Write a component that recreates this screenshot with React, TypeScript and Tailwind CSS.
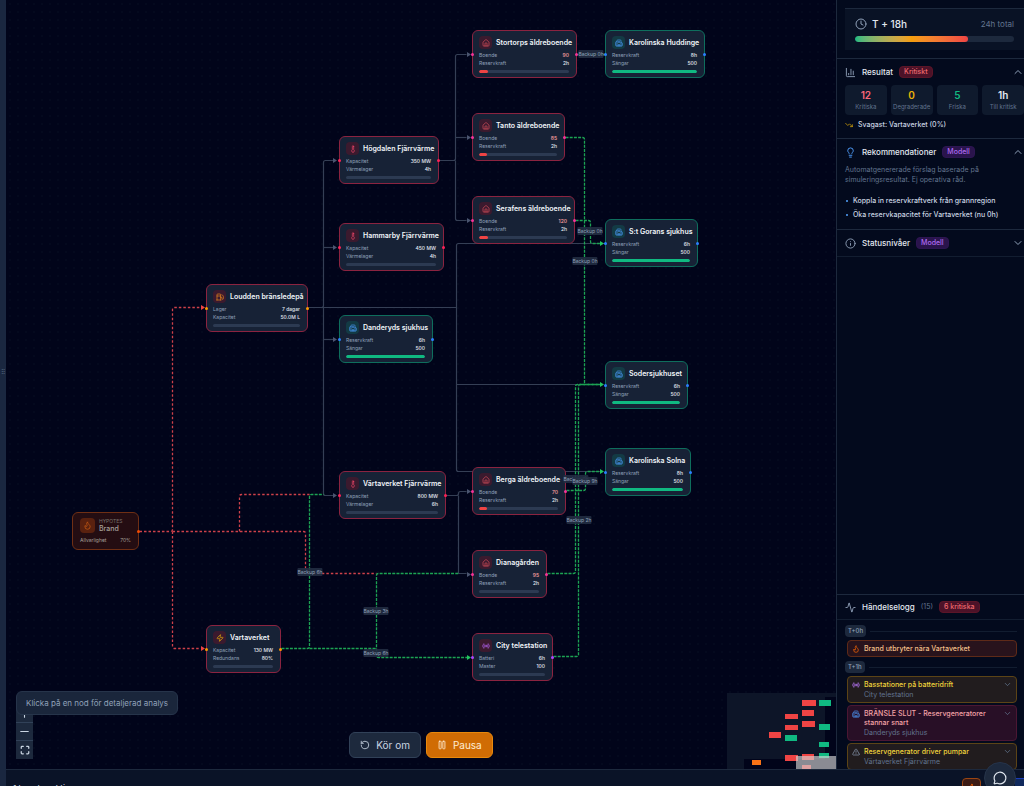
import {
  Activity,
  ChartColumn,
  ChevronDown,
  ChevronUp,
  Clock,
  Flame,
  Fuel,
  Hospital,
  House,
  Info,
  Lightbulb,
  LucideIcon,
  Maximize,
  MessageCircle,
  Minus,
  Pause,
  Plus,
  Radio,
  RotateCcw,
  Thermometer,
  TrendingDown,
  TriangleAlert,
  Zap,
} from 'lucide-react';
import { ReactNode } from 'react';

type Kind = 'care' | 'hospital' | 'heat' | 'fuel' | 'power' | 'telecom';

type NodeType = {
  title: string;
  kind: Kind;
  x: number;
  y: number;
  w: number;
  rows: [string, string][];
  level: number;
};

const kinds: Record<Kind, { icon: LucideIcon; color: string; handle: string }> = {
  care: { icon: House, color: 'text-[#e0525f]', handle: 'bg-pink-500' },
  hospital: { icon: Hospital, color: 'text-[#4b9bfa]', handle: 'bg-blue-500' },
  heat: { icon: Thermometer, color: 'text-[#f0476a]', handle: 'bg-rose-500' },
  fuel: { icon: Fuel, color: 'text-[#f08c1c]', handle: 'bg-amber-500' },
  power: { icon: Zap, color: 'text-[#eab308]', handle: 'bg-amber-500' },
  telecom: { icon: Radio, color: 'text-[#b262f0]', handle: 'bg-purple-500' },
};

const nodes: NodeType[] = [
  { title: 'Stortorps äldreboende', kind: 'care', x: 472, y: 30, w: 105, rows: [['Boende', '90'], ['Reservkraft', '2h']], level: 10 },
  { title: 'Tanto äldreboende', kind: 'care', x: 472, y: 113, w: 93, rows: [['Boende', '85'], ['Reservkraft', '2h']], level: 10 },
  { title: 'Serafens äldreboende', kind: 'care', x: 472, y: 196, w: 103, rows: [['Boende', '120'], ['Reservkraft', '2h']], level: 10 },
  { title: 'Berga äldreboende', kind: 'care', x: 472, y: 467, w: 94, rows: [['Boende', '70'], ['Reservkraft', '2h']], level: 10 },
  { title: 'Dianagården', kind: 'care', x: 472, y: 550, w: 75, rows: [['Boende', '95'], ['Reservkraft', '2h']], level: 0 },
  { title: 'City telestation', kind: 'telecom', x: 472, y: 633, w: 81, rows: [['Batteri', '6h'], ['Master', '100']], level: 0 },
  { title: 'Karolinska Huddinge', kind: 'hospital', x: 605, y: 30, w: 100, rows: [['Reservkraft', '8h'], ['Sängar', '500']], level: 100 },
  { title: 'S:t Gorans sjukhus', kind: 'hospital', x: 605, y: 219, w: 93, rows: [['Reservkraft', '6h'], ['Sängar', '500']], level: 100 },
  { title: 'Sodersjukhuset', kind: 'hospital', x: 605, y: 361, w: 83, rows: [['Reservkraft', '6h'], ['Sängar', '500']], level: 100 },
  { title: 'Karolinska Solna', kind: 'hospital', x: 605, y: 448, w: 86, rows: [['Reservkraft', '8h'], ['Sängar', '500']], level: 100 },
  { title: 'Danderyds sjukhus', kind: 'hospital', x: 339, y: 315, w: 94, rows: [['Reservkraft', '6h'], ['Sängar', '500']], level: 100 },
  { title: 'Högdalen Fjärrvärme', kind: 'heat', x: 339, y: 136, w: 100, rows: [['Kapacitet', '350 MW'], ['Värmelager', '4h']], level: 0 },
  { title: 'Hammarby Fjärrvärme', kind: 'heat', x: 339, y: 223, w: 105, rows: [['Kapacitet', '450 MW'], ['Värmelager', '4h']], level: 0 },
  { title: 'Värtaverket Fjärrvärme', kind: 'heat', x: 339, y: 471, w: 107, rows: [['Kapacitet', '800 MW'], ['Värmelager', '6h']], level: 0 },
  { title: 'Loudden bränsledepå', kind: 'fuel', x: 206, y: 284, w: 102, rows: [['Lager', '7 dagar'], ['Kapacitet', '50.0M L']], level: 0 },
  { title: 'Vartaverket', kind: 'power', x: 206, y: 625, w: 75, rows: [['Kapacitet', '130 MW'], ['Redundans', '80%']], level: 0 },
];

const supplyEdges = [
  'M308 307H321Q323 307 323 305V162Q323 160 325 160H333',
  'M323 247H333',
  'M323 339H333',
  'M323 307V493Q323 495 325 495H333',
  'M308 307H456',
  'M605 243H458Q456 243 456 245V469Q456 471 458 471H600',
  'M456 384H600',
  'M439 160H453Q455 160 455 158V56Q455 54 457 54H466',
  'M455 137H466',
  'M455 160V218Q455 220 457 220H466',
  'M446 495H456Q458 495 458 493Q458 491 460 491H466',
  'M458 495V573H466',
];

const threatEdges = [
  'M139 531H170Q172 531 172 529V309Q172 307 174 307H200',
  'M172 531V646Q172 648 174 648H200',
  'M172 531H303Q305 531 305 533V571Q305 573 307 573H376',
  'M239 531V496Q239 494 241 494H309',
];

const backupEdges = [
  'M281 648H307Q309 648 309 646V496Q309 494 311 494H323',
  'M309 648H374Q376 648 376 646V575Q376 573 378 573H458',
  'M376 648V655Q376 657 378 657H467',
  'M565 137H582Q584 137 584 139V384',
  'M575 220H588Q590 220 590 222V241Q590 243 592 243H600',
  'M566 490H583Q585 490 585 488V473Q585 471 587 471H600',
  'M547 573H573Q575 573 575 571V386Q575 384 577 384H600',
  'M553 656H576Q578 656 578 654V386Q578 384 580 384H600',
  'M577 54H605',
];

const arrows = {
  'fill-[#4b5570]': [[333, 160], [333, 247], [333, 339], [333, 495], [467, 54], [467, 137], [467, 220], [467, 491], [467, 574]],
  'fill-[#ef4444]': [[201, 307], [201, 648]],
  'fill-[#22c55e]': [[600, 243], [600, 384], [600, 471], [467, 657]],
};

const backupLabels = [
  { text: 'Backup 0h', x: 591, y: 54 },
  { text: 'Backup 0h', x: 590, y: 231 },
  { text: 'Backup 0h', x: 585, y: 261 },
  { text: 'Backup 0h', x: 576, y: 479 },
  { text: 'Backup 9h', x: 585, y: 481 },
  { text: 'Backup 2h', x: 579, y: 520 },
  { text: 'Backup 6h', x: 310, y: 572 },
  { text: 'Backup 3h', x: 376, y: 611 },
  { text: 'Backup 6h', x: 376, y: 653 },
];

const Edges = () => (
  <svg className="absolute inset-0 h-full w-full" fill="none" aria-hidden="true">
    <g transform="translate(0.5 0.5)">
      {supplyEdges.map((d) => (
        <path key={d} d={d} className="stroke-[#353f55]" strokeWidth={1.2} />
      ))}
      {threatEdges.map((d) => (
        <path key={d} d={d} className="stroke-[#cf414a]" strokeWidth={1.3} strokeDasharray="2.5 2" />
      ))}
      {backupEdges.map((d) => (
        <path key={d} d={d} className="stroke-[#1ca353]" strokeWidth={1.3} strokeDasharray="3 1.2" />
      ))}
    </g>
    {Object.entries(arrows).map(([fill, points]) =>
      points.map(([x, y]) => (
        <path key={`${x}-${y}`} d={`M${x} ${y - 2}L${x + 4} ${y + 0.5}L${x} ${y + 3}Z`} className={fill} />
      ))
    )}
  </svg>
);

const InfraNode = ({ node }: { node: NodeType }) => {
  const { title, kind, x, y, w, rows, level } = node;
  const { icon: Icon, color, handle } = kinds[kind];
  const healthy = level === 100;

  return (
    <div
      className={`absolute rounded-md border bg-[#172236] pt-[5px] pr-[7px] pb-1 pl-[6px] ${
        healthy ? 'border-[#0e6e5d]' : 'border-[#8b2340]'
      }`}
      style={{ left: x, top: y, width: w }}
    >
      <div className="flex items-center gap-1">
        <span
          className={`flex size-[13px] shrink-0 items-center justify-center rounded-sm ${
            healthy ? 'bg-[#133a44]' : 'bg-[#3b1a2e]'
          }`}
        >
          <Icon className={`size-[8px] ${color}`} />
        </span>
        <h3 className="text-[7px] leading-[9px] font-semibold whitespace-nowrap text-slate-100">
          {title}
        </h3>
      </div>
      <dl className="mt-[3px] flex flex-col gap-px text-[5px] leading-[7px]">
        {rows.map(([label, value]) => (
          <div key={label} className="flex justify-between">
            <dt className="text-slate-400">{label}</dt>
            <dd
              className={`font-medium ${
                label === 'Boende' ? 'text-red-300' : 'text-slate-200'
              }`}
            >
              {value}
            </dd>
          </div>
        ))}
      </dl>
      <div className="mt-[3px] h-[3px] overflow-hidden rounded-full bg-[#2c3a52]">
        <div
          className={`h-full rounded-full ${healthy ? 'bg-[#10b981]' : 'bg-[#ef4444]'}`}
          style={{ width: `${level}%` }}
        />
      </div>
      <span className={`absolute top-[22px] -left-[2px] size-[3px] rounded-full ${handle}`} />
      <span className={`absolute top-[22px] -right-[2px] size-[3px] rounded-full ${handle}`} />
    </div>
  );
};

const HypothesisNode = () => (
  <div
    className="absolute rounded-md border border-[#6f2f14] bg-[#240d12] px-[7px] py-[5px]"
    style={{ left: 72, top: 512, width: 67 }}
  >
    <div className="flex items-center gap-1">
      <span className="flex size-[15px] items-center justify-center rounded-sm bg-[#59210f]">
        <Flame className="size-[9px] text-[#c65a14]" />
      </span>
      <div>
        <p className="text-[5px] leading-[6px] text-stone-500">HYPOTES</p>
        <h3 className="text-[7px] leading-[9px] font-medium text-stone-400">Brand</h3>
      </div>
    </div>
    <p className="mt-1 flex justify-between text-[5px] leading-[7px] text-stone-400">
      <span>Allvarlighet</span>
      <span>70%</span>
    </p>
    <span className="absolute top-[17px] -right-[2px] size-[3px] rounded-full bg-orange-600" />
  </div>
);

const minimapNodes: Record<string, number[][]> = {
  'fill-[#ef4444]': [
    [75, 7, 14, 6], [75, 17, 12, 6], [75, 28, 13, 6], [58, 21, 13, 5], [58, 32, 13, 5],
    [42, 39, 12, 6], [58, 62, 13, 6], [75, 61, 12, 6], [75, 72, 9, 4],
  ],
  'fill-[#10b981]': [[92, 7, 12, 6], [92, 31, 11, 6], [58, 42, 12, 6], [92, 49, 10, 5], [92, 60, 10, 5]],
  'fill-[#f97316]': [[25, 67, 9, 5]],
};

const MiniMap = () => (
  <svg className="absolute right-0 bottom-0 h-[76px] w-[109px] bg-[#0d1528]" viewBox="0 0 109 76" aria-hidden="true">
    <path d="M98 4H109V76H17V66H98Z" className="fill-[#01041a]" />
    {Object.entries(minimapNodes).map(([fill, rects]) =>
      rects.map(([x, y, width, height]) => (
        <rect key={`${x}-${y}`} x={x} y={y} width={width} height={height} className={fill} />
      ))
    )}
    <rect x="69" y="63" width="40" height="13" fill="#d4d4d4" opacity="0.65" />
  </svg>
);

const Canvas = () => (
  <main className="relative min-w-0 flex-1 overflow-hidden bg-[#01041a] bg-[radial-gradient(#04091e_1px,transparent_1px)] bg-[size:8px_8px]">
    {/* panned viewport */}
    <div className="absolute inset-0 -left-1.5">
      <Edges />
      {nodes.map((node) => (
        <InfraNode key={node.title} node={node} />
      ))}
      <HypothesisNode />
      {backupLabels.map(({ text, x, y }) => (
        <span
          key={`${x}-${y}`}
          className="absolute -translate-x-1/2 -translate-y-1/2 rounded-[1px] bg-[#222e42]/90 text-[5px] leading-[8px] whitespace-nowrap text-slate-400"
          style={{ left: x, top: y }}
        >
          {text}
        </span>
      ))}
    </div>
    <MiniMap />
    <div className="absolute bottom-[10px] left-[10px] flex w-[17px] flex-col divide-y divide-slate-700 bg-slate-800 text-slate-300">
      <button aria-label="Zooma in" className="flex h-[18px] items-center justify-center">
        <Plus className="size-[13px]" />
      </button>
      <button aria-label="Zooma ut" className="flex h-[18px] items-center justify-center">
        <Minus className="size-[13px]" />
      </button>
      <button aria-label="Anpassa vy" className="flex h-[18px] items-center justify-center">
        <Maximize className="size-[10px]" strokeWidth={3} />
      </button>
    </div>
    <p className="absolute bottom-[54px] left-[10px] rounded-md border border-[#26344a] bg-[#1a263b] px-[9px] py-[5px] text-[8px] leading-3 text-slate-400">
      Klicka på en nod för detaljerad analys
    </p>
    <div className="absolute inset-x-0 bottom-[11px] flex justify-center gap-[5px] text-[10px] leading-4">
      <button className="flex items-center gap-[6px] rounded-md border border-slate-700 bg-slate-800 px-[10px] py-1 text-slate-300">
        <RotateCcw className="size-[10px]" />
        Kör om
      </button>
      <button className="flex items-center gap-[6px] rounded-md border border-[#e8890c] bg-[#d06c04] px-[10px] py-1 text-orange-100">
        <Pause className="size-[10px]" />
        Pausa
      </button>
    </div>
  </main>
);

const Badge = ({ tone, children }: { tone: 'red' | 'purple'; children: ReactNode }) => (
  <span
    className={`rounded-sm border px-1 text-[7px] leading-[10px] font-medium ${
      tone === 'red'
        ? 'border-[#5b1528] bg-[#4c1228] text-[#f06a6e]'
        : 'border-[#2d1552] bg-[#2a144c] text-[#ae6bf0]'
    }`}
  >
    {children}
  </span>
);

type Section = {
  icon: LucideIcon;
  iconColor?: string;
  title: string;
  badge: ReactNode;
  open?: boolean;
};

const SectionHeader = ({ icon: Icon, iconColor = 'text-slate-400', title, badge, open }: Section) => (
  <button className="flex h-[26px] w-full items-center gap-[6px] text-left">
    <Icon className={`size-[11px] ${iconColor}`} />
    <span className="text-[8px] leading-3 font-medium text-slate-200">{title}</span>
    {badge}
    {open ? (
      <ChevronUp className="ml-auto size-3 text-slate-400" />
    ) : (
      <ChevronDown className="ml-auto size-3 text-slate-400" />
    )}
  </button>
);

const stats = [
  { value: '12', label: 'Kritiska', color: 'text-[#f8667a]' },
  { value: '0', label: 'Degraderade', color: 'text-[#eab308]' },
  { value: '5', label: 'Friska', color: 'text-[#10b981]' },
  { value: '1h', label: 'Till kritisk', color: 'text-slate-200' },
];

const advice = [
  'Koppla in reservkraftverk från grannregion',
  'Öka reservkapacitet för Vartaverket (nu 0h)',
];

type LogEvent = {
  icon: LucideIcon;
  iconColor: string;
  title: string;
  source?: string;
  box: string;
};

const log: { time: string; events: LogEvent[] }[] = [
  {
    time: 'T+0h',
    events: [
      { icon: Flame, iconColor: 'text-orange-500', title: 'Brand utbryter nära Vartaverket', box: 'border-[#5e2a18] bg-[#28131c] text-[#f5c08a]' },
    ],
  },
  {
    time: 'T+1h',
    events: [
      { icon: Radio, iconColor: 'text-purple-400', title: 'Basstationer på batteridrift', source: 'City telestation', box: 'border-[#5c4416] bg-[#211c1e] text-[#f0d33c]' },
      { icon: Hospital, iconColor: 'text-[#4b9bfa]', title: 'BRÄNSLE SLUT - Reservgeneratorer stannar snart', source: 'Danderyds sjukhus', box: 'border-[#4b1733] bg-[#280f26] text-[#f5a3a8]' },
      { icon: TriangleAlert, iconColor: 'text-slate-400', title: 'Reservgenerator driver pumpar', source: 'Värtaverket Fjärrvärme', box: 'border-[#5c4416] bg-[#211c1e] text-[#f0d33c]' },
    ],
  },
];

const EventCard = ({ event }: { event: LogEvent }) => {
  const { icon: Icon, iconColor, title, source, box } = event;
  return (
    <li className={`flex items-start gap-1 rounded-sm border px-1 py-[3px] ${box}`}>
      <Icon className={`mt-px size-[8px] shrink-0 ${iconColor}`} />
      <div className="flex-1">
        <p className="text-[7px] leading-[9px] font-medium">{title}</p>
        {source && <p className="mt-px text-[7px] leading-[9px] text-slate-500">{source}</p>}
      </div>
      {source && <ChevronDown className="size-[9px] shrink-0 text-slate-500" />}
    </li>
  );
};

const Sidebar = () => (
  <aside className="flex w-[188px] shrink-0 flex-col overflow-hidden border-l border-slate-800 bg-[#030a1d]">
    <div className="border-b border-slate-800 pt-2 pb-2 pl-2">
      <div className="border-t border-slate-800 bg-[#091225] px-[10px] py-2">
        <div className="flex items-center gap-[5px]">
          <Clock className="size-[12px] text-slate-400" />
          <span className="text-[10px] leading-[14px] font-medium text-slate-200">T + 18h</span>
          <span className="ml-auto text-[8px] leading-3 text-slate-500">24h total</span>
        </div>
        <div className="mt-[5px] h-[6px] overflow-hidden rounded-full bg-slate-800">
          <div
            className="h-full rounded-full bg-linear-to-r from-[#10b981] via-[#f59e0b] to-[#ef4444]"
            style={{ width: '71%' }}
          />
        </div>
      </div>
    </div>

    <section className="border-b border-slate-800 pb-2 pl-2">
      <SectionHeader icon={ChartColumn} title="Resultat" badge={<Badge tone="red">Kritiskt</Badge>} open />
      <div className="grid grid-cols-4 gap-1">
        {stats.map(({ value, label, color }) => (
          <div key={label} className="rounded-sm bg-[#0f1a2d] py-1 text-center">
            <p className={`text-[10px] leading-[13px] font-semibold ${color}`}>{value}</p>
            <p className="text-[6px] leading-[9px] text-slate-500">{label}</p>
          </div>
        ))}
      </div>
      <p className="mt-[5px] flex items-center gap-[5px] text-[7px] leading-[10px] font-medium text-slate-300">
        <TrendingDown className="size-[8px] text-[#eab308]" />
        Svagast: Vartaverket (0%)
      </p>
    </section>

    <section className="border-b border-slate-800 pb-[9px] pl-2">
      <SectionHeader icon={Lightbulb} iconColor="text-blue-400" title="Rekommendationer" badge={<Badge tone="purple">Modell</Badge>} open />
      <p className="mr-8 text-[7px] leading-[10px] text-slate-500">
        Automatgenererade förslag baserade på simuleringsresultat. Ej operativa råd.
      </p>
      <ul className="mt-[11px] flex flex-col gap-1 text-[7px] leading-[10px] font-medium text-slate-300">
        {advice.map((item) => (
          <li key={item} className="flex items-center gap-[5px] whitespace-nowrap">
            <span className="ml-px size-[2px] rounded-full bg-blue-400" />
            {item}
          </li>
        ))}
      </ul>
    </section>

    <section className="border-b border-slate-800/60 pl-2">
      <SectionHeader icon={Info} title="Statusnivåer" badge={<Badge tone="purple">Modell</Badge>} />
    </section>

    <section className="mt-auto flex h-[175px] shrink-0 flex-col overflow-hidden border-t border-slate-800">
      <h2 className="flex h-[25px] shrink-0 items-center gap-[6px] border-b border-slate-800/60 pl-2 text-[8px] leading-3 font-medium text-slate-200">
        <Activity className="size-[11px] text-slate-400" />
        Händelselogg
        <span className="text-[7px] font-normal text-slate-500">(15)</span>
        <Badge tone="red">6 kritiska</Badge>
      </h2>
      <div className="pt-[5px] pr-[7px] pl-2">
        {log.map(({ time, events }) => (
          <div key={time} className="mb-1">
            <div className="flex items-center gap-1">
              <span className="rounded-sm bg-slate-800 px-[3px] text-[6px] leading-3 font-medium text-slate-400">
                {time}
              </span>
              <span className="h-px flex-1 bg-slate-800/60" />
            </div>
            <ul className="mt-[3px] ml-[2px] flex flex-col gap-[2px]">
              {events.map((event) => (
                <EventCard key={event.title} event={event} />
              ))}
            </ul>
          </div>
        ))}
      </div>
    </section>
  </aside>
);

const Footer = () => (
  <footer className="flex h-[17px] shrink-0 items-start justify-between overflow-hidden border-t border-slate-800 bg-[#0a1327] pl-[7px]">
    <p className="mt-3 text-[8px] leading-3 font-medium text-slate-300">1 hypotes aktiva</p>
    <div className="mt-2 flex gap-[34px]">
      <button
        aria-label="Brand"
        className="flex h-5 w-[19px] items-center justify-center rounded-sm border border-[#9a4512] bg-[#3d1b15] text-orange-500"
      >
        <Flame className="size-[10px]" />
      </button>
      <button aria-label="Nästa" className="h-5 w-[9px] border-t border-blue-800 bg-[#10295c]" />
    </div>
  </footer>
);

const App = () => (
  <div className="relative flex h-screen overflow-hidden bg-[#01041a] font-['Inter',sans-serif]">
    <div className="flex w-[6px] shrink-0 items-center justify-center bg-[#1a2740] pb-[42px]">
      <span className="text-[6px] leading-none text-slate-500">⠿</span>
    </div>
    <div className="flex min-w-0 flex-1 flex-col">
      <div className="flex min-h-0 flex-1">
        <Canvas />
        <Sidebar />
      </div>
      <Footer />
    </div>
    <button
      aria-label="Öppna chatt"
      className="absolute right-2 -bottom-2 flex size-8 items-center justify-center rounded-full border border-[#26344a] bg-slate-800 text-slate-200"
    >
      <MessageCircle className="size-[14px]" />
    </button>
  </div>
);

export default App;
